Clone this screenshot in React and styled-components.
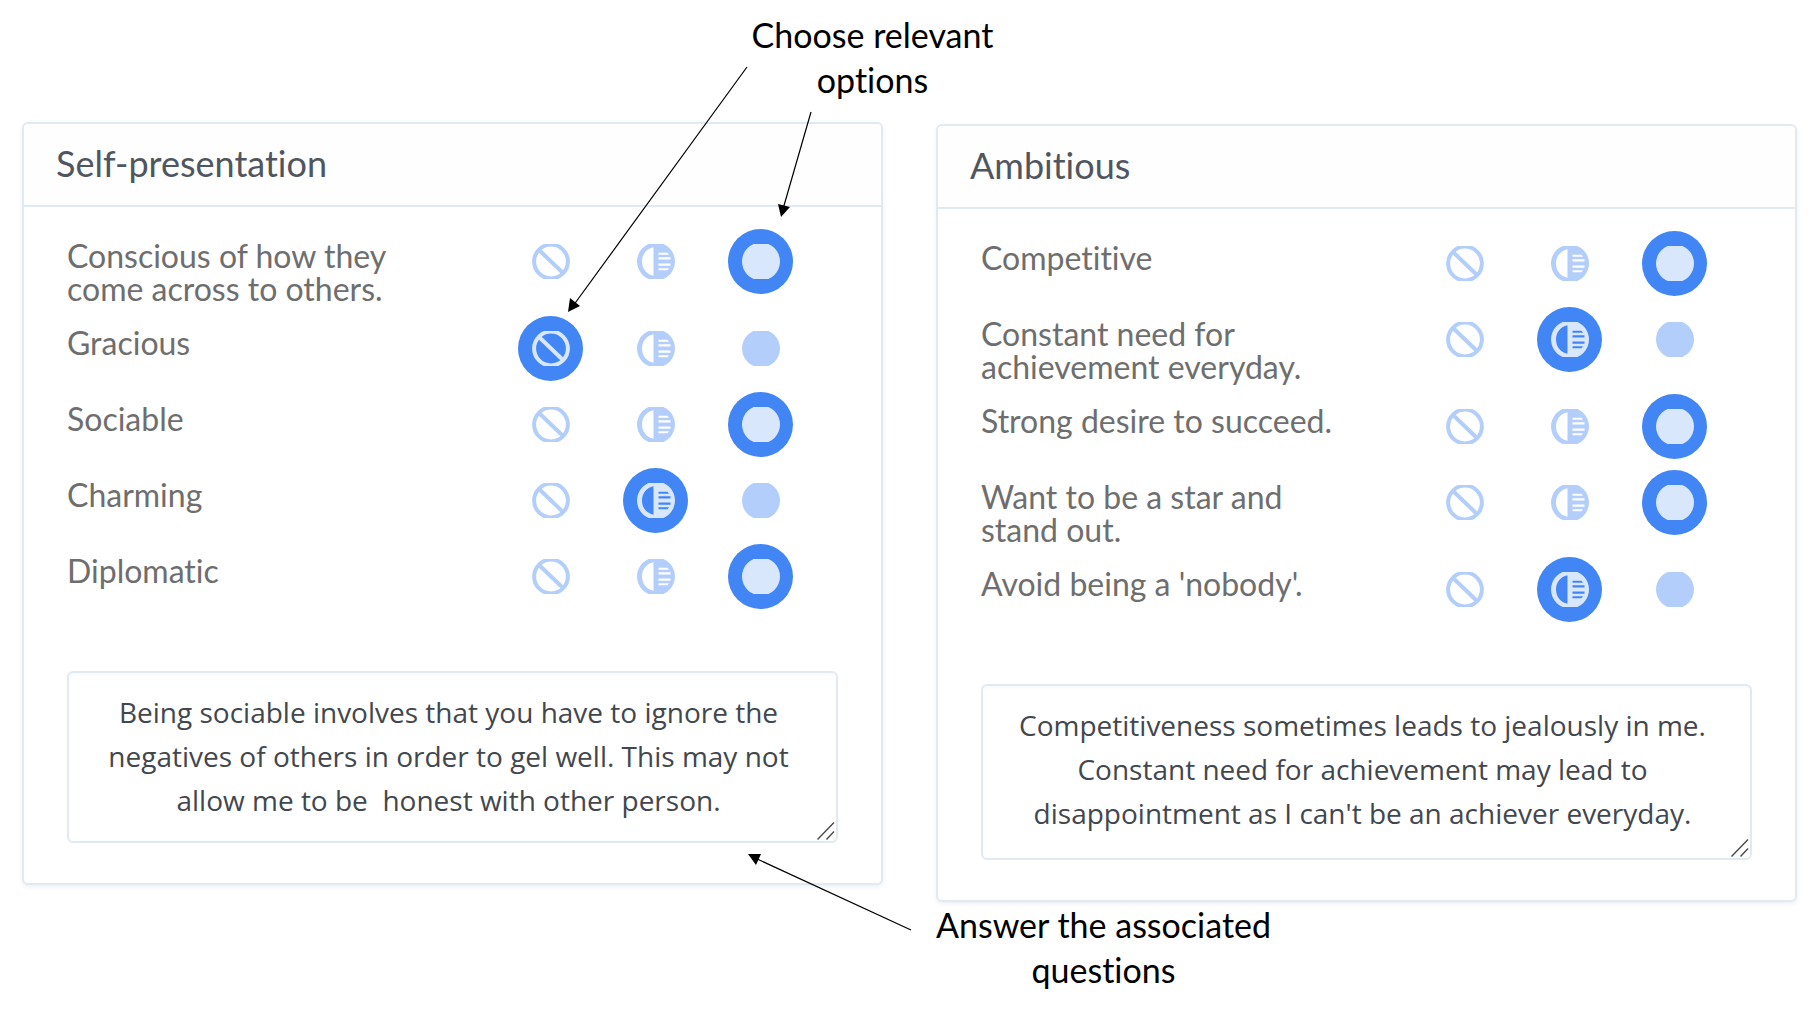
import React, { useId, useState } from "react";
import styled, { createGlobalStyle } from "styled-components";

const GlobalStyle = createGlobalStyle`
  *, *::before, *::after { box-sizing: border-box; }
  body {
    margin: 0;
    background: #ffffff;
    font-family: Lato, "Open Sans", sans-serif;
    font-variant-ligatures: none;
  }
`;

const Page = styled.main`
  min-height: 100vh;
  padding: 12px 15px 16px 22px;
`;

const Callout = styled.p`
  width: max-content;
  margin: 0;
  color: #000000;
  font-size: 34px;
  line-height: 45px;
  text-align: center;
`;

const CalloutBar = styled.div`
  display: flex;
  justify-content: center;
  padding: 0 74px 20px 0;
`;

const Columns = styled.div`
  display: grid;
  grid-template-columns: minmax(0, 1fr) minmax(0, 1fr);
  align-items: start;
  gap: 53px;
`;

const Column = styled.div`
  position: relative;
  padding-top: ${(p) => p.$drop || 0}px;
`;

const Card = styled.section`
  border: 2px solid #e1e9f3;
  border-radius: 6px;
  background: #ffffff;
  box-shadow: 0 2px 4px rgba(40, 60, 90, 0.08);
`;

const CardHeader = styled.header`
  padding: 17px 32px 20px;
  border-bottom: 2px solid #e1e9f3;
  border-radius: 4px 4px 0 0;
  background: #fefefe;
`;

const CardTitle = styled.h2`
  margin: 0;
  color: #50565f;
  font-size: 36px;
  font-weight: 400;
  line-height: 44px;
`;

const CardBody = styled.div`
  padding: 22px 43px 40px;
`;

const Traits = styled.div`
  display: flex;
  flex-direction: column;
  gap: 10px;
`;

const TraitRow = styled.div`
  display: flex;
  align-items: flex-start;
  min-height: 66px;
  padding-right: 45px;
`;

const TraitName = styled.span`
  flex: 1;
  padding: 10px 88px 1px 0;
  color: #6e6e6e;
  font-size: 32px;
  line-height: 33px;
`;

const Options = styled.div`
  display: flex;
  gap: 40px;
`;

const Option = styled.label`
  position: relative;
  display: grid;
  place-items: center;
  width: 65px;
  height: 65px;
  border-radius: 50%;
  color: #b3cefb;
  cursor: pointer;

  &:has(input:checked) {
    background: #4285f4;
    color: #d9e7fd;
  }

  &:has(input:focus-visible) {
    outline: 2px solid #1a5fd8;
  }
`;

const OptionInput = styled.input`
  position: absolute;
  inset: 0;
  width: 100%;
  height: 100%;
  margin: 0;
  opacity: 0;
  cursor: pointer;
`;

const Glyph = styled.svg`
  display: block;
  width: 38px;
  height: 35px;
`;

const AnswerBox = styled.div`
  position: relative;
  margin-top: 61px;
`;

const Answer = styled.textarea`
  display: block;
  width: 100%;
  height: ${(p) => p.$height}px;
  padding: 17px 32px 16px 24px;
  overflow: hidden;
  border: 2px solid #e1e9f3;
  border-radius: 6px;
  background: #ffffff;
  box-shadow: inset 0 2px 2px rgba(40, 60, 90, 0.03);
  color: #42474e;
  font-family: "Open Sans", "Noto Sans", sans-serif;
  font-size: 28px;
  line-height: 44px;
  text-align: center;
  resize: none;
`;

const Grip = styled.svg`
  position: absolute;
  right: 3px;
  bottom: 3px;
  width: 18px;
  height: 18px;
  pointer-events: none;
`;

const Arrows = styled.svg`
  position: absolute;
  top: -62px;
  right: -40px;
  width: 400px;
  height: 900px;
  pointer-events: none;
`;

function NoneGlyph() {
  return (
    <Glyph viewBox="0 0 38 35" aria-hidden="true">
      <g fill="none" stroke="currentColor" strokeWidth="4">
        <circle cx="19" cy="17.5" r="16.9" />
        <path d="M7 6 L31 29" />
      </g>
    </Glyph>
  );
}

function PartlyGlyph() {
  return (
    <Glyph viewBox="0 0 38 35" aria-hidden="true">
      <path
        fill="currentColor"
        fillRule="evenodd"
        d="M19 -1.5a19 19 0 1 1 0 38a19 19 0 1 1 0 -38Z
           M16.5 3.2C9.5 4.6 5 10.4 5 17.5s4.5 12.9 11.5 14.3Z
           M21.5 8.8h9l1.5 2h-10.5Z
           M21.5 13.3h12v2.2h-12Z
           M21.5 19.5h12v2.2h-12Z
           M21.5 24.2h10.5l-1.5 2h-9Z"
      />
    </Glyph>
  );
}

function FullyGlyph() {
  return (
    <Glyph viewBox="0 0 38 35" aria-hidden="true">
      <circle cx="19" cy="17.5" r="19" fill="currentColor" />
    </Glyph>
  );
}

const LEVELS = [
  { value: "none", title: "Not at all", Icon: NoneGlyph },
  { value: "partly", title: "Partly", Icon: PartlyGlyph },
  { value: "fully", title: "Fully", Icon: FullyGlyph },
];

function Trait({ name, initial }) {
  const id = useId();
  const [level, setLevel] = useState(initial);
  return (
    <TraitRow role="radiogroup" aria-labelledby={id}>
      <TraitName id={id}>{name}</TraitName>
      <Options>
        {LEVELS.map(({ value, title, Icon }) => (
          <Option key={value}>
            <OptionInput
              type="radio"
              name={id + "level"}
              value={value}
              aria-label={title}
              checked={level === value}
              onChange={() => setLevel(value)}
            />
            <Icon />
          </Option>
        ))}
      </Options>
    </TraitRow>
  );
}

function TraitCard({ title, traits, answer, answerHeight }) {
  const titleId = useId();
  return (
    <Card>
      <CardHeader>
        <CardTitle id={titleId}>{title}</CardTitle>
      </CardHeader>
      <CardBody>
        <Traits>
          {traits.map(([name, initial]) => (
            <Trait key={name} name={name} initial={initial} />
          ))}
        </Traits>
        <AnswerBox>
          <Answer aria-labelledby={titleId} defaultValue={answer} $height={answerHeight} spellCheck={false} />
          <Grip viewBox="0 0 18 18" aria-hidden="true">
            <path d="M0.5 17.5 L17 0.5 M9.5 17.5 L17 9.5" stroke="#4a4a4a" strokeWidth="1.4" fill="none" />
          </Grip>
        </AnswerBox>
      </CardBody>
    </Card>
  );
}

const SELF_PRESENTATION = [
  ["Conscious of how they come across to others.", "fully"],
  ["Gracious", "none"],
  ["Sociable", "fully"],
  ["Charming", "partly"],
  ["Diplomatic", "fully"],
];

const AMBITIOUS = [
  ["Competitive", "fully"],
  ["Constant need for achievement everyday.", "partly"],
  ["Strong desire to succeed.", "fully"],
  ["Want to be a star and stand out.", "fully"],
  ["Avoid being a 'nobody'.", "partly"],
];

export default function App() {
  return (
    <>
      <GlobalStyle />
      <Page>
        <CalloutBar>
          <Callout>
            Choose relevant
            <br />
            options
          </Callout>
        </CalloutBar>
        <Columns>
          <Column>
            <TraitCard
              title="Self-presentation"
              traits={SELF_PRESENTATION}
              answer="Being sociable involves that you have to ignore the negatives of others in order to gel well. This may not allow me to be  honest with other person."
              answerHeight={172}
            />
            <Arrows viewBox="0 0 400 900" aria-hidden="true">
              <path d="M224 7 L50 246 M288 52 L260 149 M388 870 L232 798" stroke="#000000" strokeWidth="1.2" fill="none" />
              <path d="M45 252 L47 238 L57 246 Z M258 157 L255 144 L267 147 Z M225 794 L238 794 L233 805 Z" fill="#000000" />
            </Arrows>
          </Column>
          <Column $drop={2}>
            <TraitCard
              title="Ambitious"
              traits={AMBITIOUS}
              answer="Competitiveness sometimes leads to jealously in me. Constant need for achievement may lead to disappointment as I can't be an achiever everyday."
              answerHeight={176}
            />
            <Callout>
              Answer the associated
              <br />
              questions
            </Callout>
          </Column>
        </Columns>
      </Page>
    </>
  );
}
